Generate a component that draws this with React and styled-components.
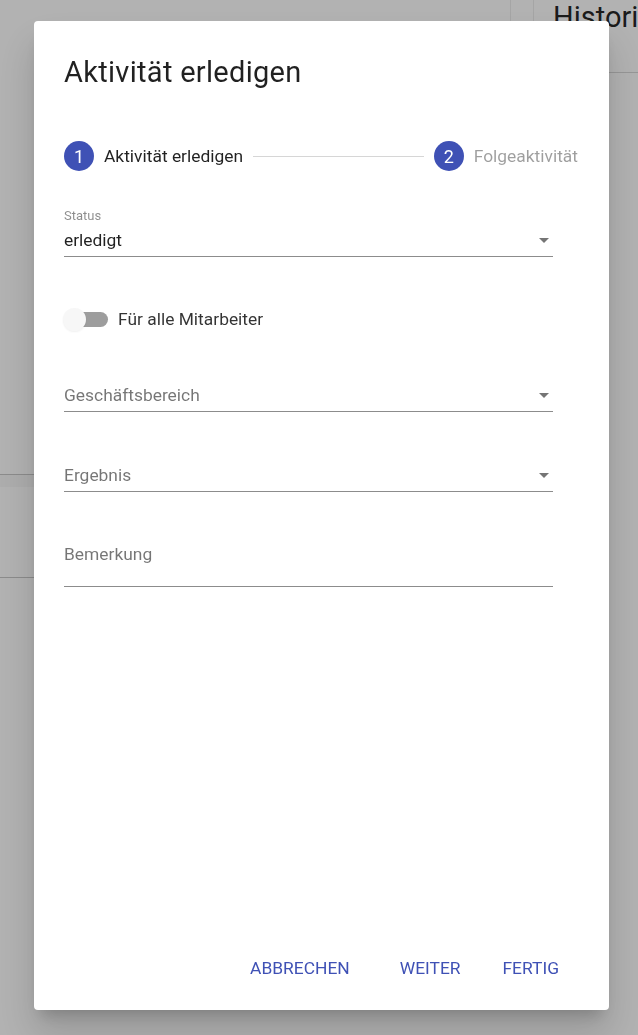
import styled, { createGlobalStyle } from "styled-components";

const GlobalStyle = createGlobalStyle`
  html, body {
    margin: 0;
    padding: 0;
    font-family: Roboto, "Liberation Sans", Arial, sans-serif;
    background: #fff;
  }
`;

// page behind the modal
const Page = styled.div`
  display: flex;
  height: 1035px;
  background: #fff;
  overflow: hidden;
`;

const LeftPane = styled.div`
  width: 510px;
  flex-shrink: 0;
  padding-top: 474px;
`;

const TableRow = styled.div`
  height: 102px;
  border-top: 1px solid #c8c8c8;
  background: ${(p) => (p.$band ? "linear-gradient(#f8f8f8 0 12px, #fff 12px)" : "#fff")};
`;

const RightPane = styled.div`
  flex: 1;
  min-width: 0;
  display: flex;
  align-items: flex-start;
`;

const Gutter = styled.div`
  width: 22px;
  height: 72px;
  flex-shrink: 0;
  border-left: 1px solid #ececec;
  border-right: 1px solid #ececec;
`;

const Panel = styled.div`
  flex: 1;
  padding-left: 19px;
  overflow: hidden;
`;

const PaneHeader = styled.div`
  height: 71px;
  padding-top: 1px;
  border-bottom: 1px solid #d8d8d8;
  font-size: 29px;
  line-height: 32px;
  color: rgba(0, 0, 0, 0.87);
  white-space: nowrap;
`;

// modal
const Overlay = styled.div`
  position: fixed;
  inset: 0;
  background: rgba(0, 0, 0, 0.3);
  display: flex;
  align-items: flex-start;
  padding: 21px 0 0 34px;
`;

const Dialog = styled.div`
  width: 575px;
  height: 989px;
  box-sizing: border-box;
  background: #fff;
  border-radius: 4px;
  box-shadow: 0 11px 15px -7px rgba(0, 0, 0, 0.2), 0 24px 38px 3px rgba(0, 0, 0, 0.14);
  display: flex;
  flex-direction: column;
  padding: 35px 31px 24px 30px;
`;

const Title = styled.h2`
  margin: 0;
  font-size: 29px;
  font-weight: 400;
  line-height: 32px;
  letter-spacing: 0.3px;
  color: rgba(0, 0, 0, 0.87);
`;

const Stepper = styled.div`
  display: flex;
  align-items: center;
  margin-top: 53px;
`;

const Step = styled.div`
  display: flex;
  align-items: center;
  gap: 10px;
`;

const StepIcon = styled.span`
  width: 30px;
  height: 30px;
  border-radius: 50%;
  background: #3f51b5;
  color: #fff;
  font-size: 18px;
  display: flex;
  align-items: center;
  justify-content: center;
`;

const StepLabel = styled.span`
  font-size: 17.4px;
  color: ${(p) => (p.$active ? "rgba(0,0,0,0.87)" : "rgba(0,0,0,0.38)")};
`;

const Connector = styled.div`
  flex: 1;
  margin: 0 10px;
  border-top: 1px solid #d6d6d6;
`;

const Form = styled.div`
  width: 489px;
  flex: 1;
`;

const Field = styled.div`
  margin-top: ${(p) => p.$top}px;
`;

const SmallLabel = styled.div`
  font-size: 13px;
  line-height: 14px;
  color: rgba(0, 0, 0, 0.45);
`;

const InputRow = styled.div`
  position: relative;
  height: ${(p) => p.$height || 32}px;
  margin-top: ${(p) => (p.$shrunk ? 1 : 0)}px;
  border-bottom: 1px solid #8c8c8c;
  font-size: 17.4px;
  line-height: 32px;
  color: ${(p) => (p.$placeholder ? "rgba(0,0,0,0.54)" : "rgba(0,0,0,0.87)")};
`;

const Arrow = styled.svg`
  position: absolute;
  right: -3px;
  top: 4px;
  width: 24px;
  height: 24px;
  fill: rgba(0, 0, 0, 0.54);
`;

const SwitchRow = styled.div`
  display: flex;
  align-items: center;
  height: 24px;
  margin-top: 50px;
  gap: 10px;
`;

const Track = styled.span`
  position: relative;
  width: 44px;
  height: 15px;
  border-radius: 8px;
  background: #9d9d9d;
`;

const Thumb = styled.span`
  position: absolute;
  left: -1px;
  top: -4px;
  width: 23px;
  height: 23px;
  border-radius: 50%;
  background: #f7f7f7;
  box-shadow: 0 1px 2px rgba(0, 0, 0, 0.06);
`;

const SwitchLabel = styled.span`
  font-size: 17.4px;
  color: rgba(0, 0, 0, 0.8);
`;

const Actions = styled.div`
  display: flex;
  justify-content: flex-end;
  align-items: center;
  gap: 10px;
  margin-right: 3px;
`;

const Button = styled.button`
  border: none;
  background: transparent;
  font-family: inherit;
  font-size: 17.4px;
  text-transform: uppercase;
  color: #3f51b5;
  height: 36px;
  padding: 0 16px;
  margin-right: ${(p) => p.$gap || 0}px;
  cursor: pointer;
`;

const DropIcon = () => (
  <Arrow viewBox="0 0 24 24">
    <path d="M7 10l5 5 5-5z" />
  </Arrow>
);

const App = () => {
  return (
    <>
      <GlobalStyle />
      <Page>
        <LeftPane>
          <TableRow $band />
          <TableRow />
        </LeftPane>
        <RightPane>
          <Gutter />
          <Panel>
            <PaneHeader>Historie</PaneHeader>
          </Panel>
        </RightPane>
      </Page>
      <Overlay>
        <Dialog>
          <Title>Aktivität erledigen</Title>
          <Stepper>
            <Step>
              <StepIcon>1</StepIcon>
              <StepLabel $active>Aktivität erledigen</StepLabel>
            </Step>
            <Connector />
            <Step>
              <StepIcon>2</StepIcon>
              <StepLabel>Folgeaktivität</StepLabel>
            </Step>
          </Stepper>
          <Form>
            <Field $top={38}>
              <SmallLabel>Status</SmallLabel>
              <InputRow $shrunk>
                erledigt
                <DropIcon />
              </InputRow>
            </Field>
            <SwitchRow>
              <Track>
                <Thumb />
              </Track>
              <SwitchLabel>Für alle Mitarbeiter</SwitchLabel>
            </SwitchRow>
            <Field $top={48}>
              <InputRow $placeholder>
                Geschäftsbereich
                <DropIcon />
              </InputRow>
            </Field>
            <Field $top={47}>
              <InputRow $placeholder>
                Ergebnis
                <DropIcon />
              </InputRow>
            </Field>
            <Field $top={46}>
              <InputRow $placeholder $height={48}>
                Bemerkung
              </InputRow>
            </Field>
          </Form>
          <Actions>
            <Button $gap={8}>Abbrechen</Button>
            <Button>Weiter</Button>
            <Button>Fertig</Button>
          </Actions>
        </Dialog>
      </Overlay>
    </>
  );
};

export default App;
